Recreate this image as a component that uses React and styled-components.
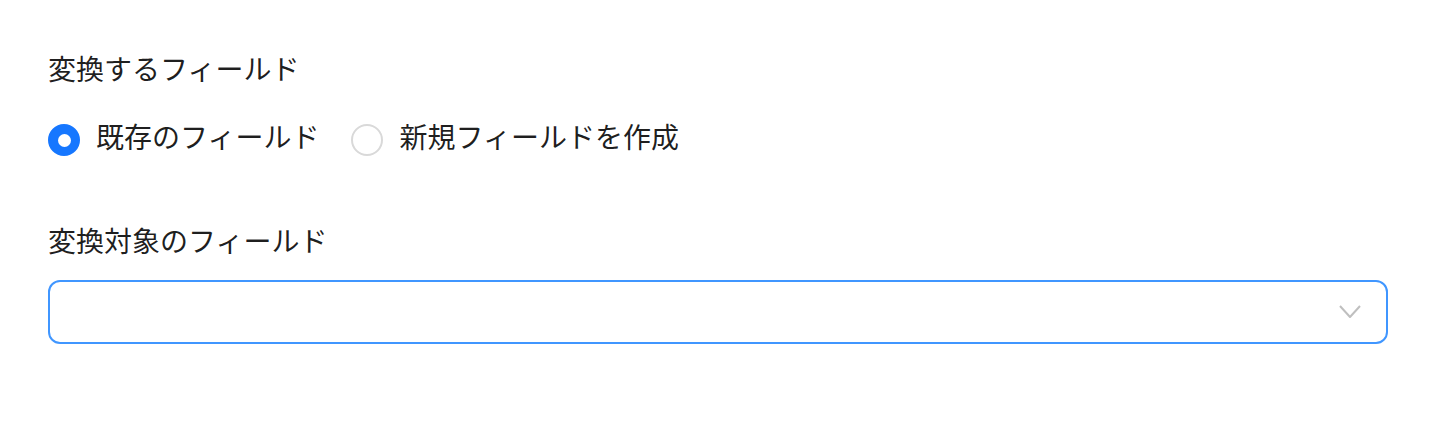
import React from "react"
import styled, { createGlobalStyle } from "styled-components"

const GlobalStyle = createGlobalStyle`
  body {
    margin: 0;
    background: #ffffff;
    font-family: "Noto Sans CJK JP", "Noto Sans", sans-serif;
    color: rgba(0, 0, 0, 0.88);
  }
`

const Form = styled.div`
  padding: 46px 48px 0 48px;
`

const Item = styled.div`
  margin-bottom: ${(p) => p.gap || 0}px;
`

const Label = styled.div`
  font-size: 28px;
  line-height: 44px;
  padding-bottom: 16px;
`

const RadioGroup = styled.div`
  display: flex;
  align-items: center;
  padding-top: 8px;
`

const RadioWrapper = styled.label`
  display: inline-flex;
  align-items: center;
  margin-right: 16px;
  font-size: 28px;
  line-height: 44px;
  cursor: pointer;
`

const RadioCircle = styled.span`
  box-sizing: border-box;
  width: 32px;
  height: 32px;
  border-radius: 50%;
  position: relative;
  top: 4px;
  border: 2px solid ${(p) => (p.checked ? "#1677ff" : "#d9d9d9")};
  background: ${(p) => (p.checked ? "#1677ff" : "#ffffff")};
  display: flex;
  align-items: center;
  justify-content: center;

  &::after {
    content: "";
    width: 13px;
    height: 13px;
    border-radius: 50%;
    background: #ffffff;
    display: ${(p) => (p.checked ? "block" : "none")};
  }
`

const RadioText = styled.span`
  padding: 0 16px;
`

const Select = styled.div`
  box-sizing: border-box;
  height: 64px;
  border: 2px solid #4096ff;
  border-radius: 12px;
  display: flex;
  align-items: center;
  justify-content: flex-end;
  padding-right: 24px;
  margin-top: 2px;
`

const Chevron = () => (
  <svg width="24" height="24" viewBox="0 0 24 24" fill="none">
    <path d="M2 6 L12 17 L22 6" stroke="#bfbfbf" strokeWidth="2" strokeLinejoin="round" />
  </svg>
)

const Radio = ({ checked, children }) => (
  <RadioWrapper>
    <RadioCircle checked={checked} />
    <RadioText>{children}</RadioText>
  </RadioWrapper>
)

export default function App() {
  const [mode, setMode] = React.useState("existing")
  return (
    <>
      <GlobalStyle />
      <Form>
        <Item gap={60}>
          <Label>変換するフィールド</Label>
          <RadioGroup>
            <span onClick={() => setMode("existing")}>
              <Radio checked={mode === "existing"}>既存のフィールド</Radio>
            </span>
            <span onClick={() => setMode("new")}>
              <Radio checked={mode === "new"}>新規フィールドを作成</Radio>
            </span>
          </RadioGroup>
        </Item>
        <Item>
          <Label>変換対象のフィールド</Label>
          <Select>
            <Chevron />
          </Select>
        </Item>
      </Form>
    </>
  )
}
